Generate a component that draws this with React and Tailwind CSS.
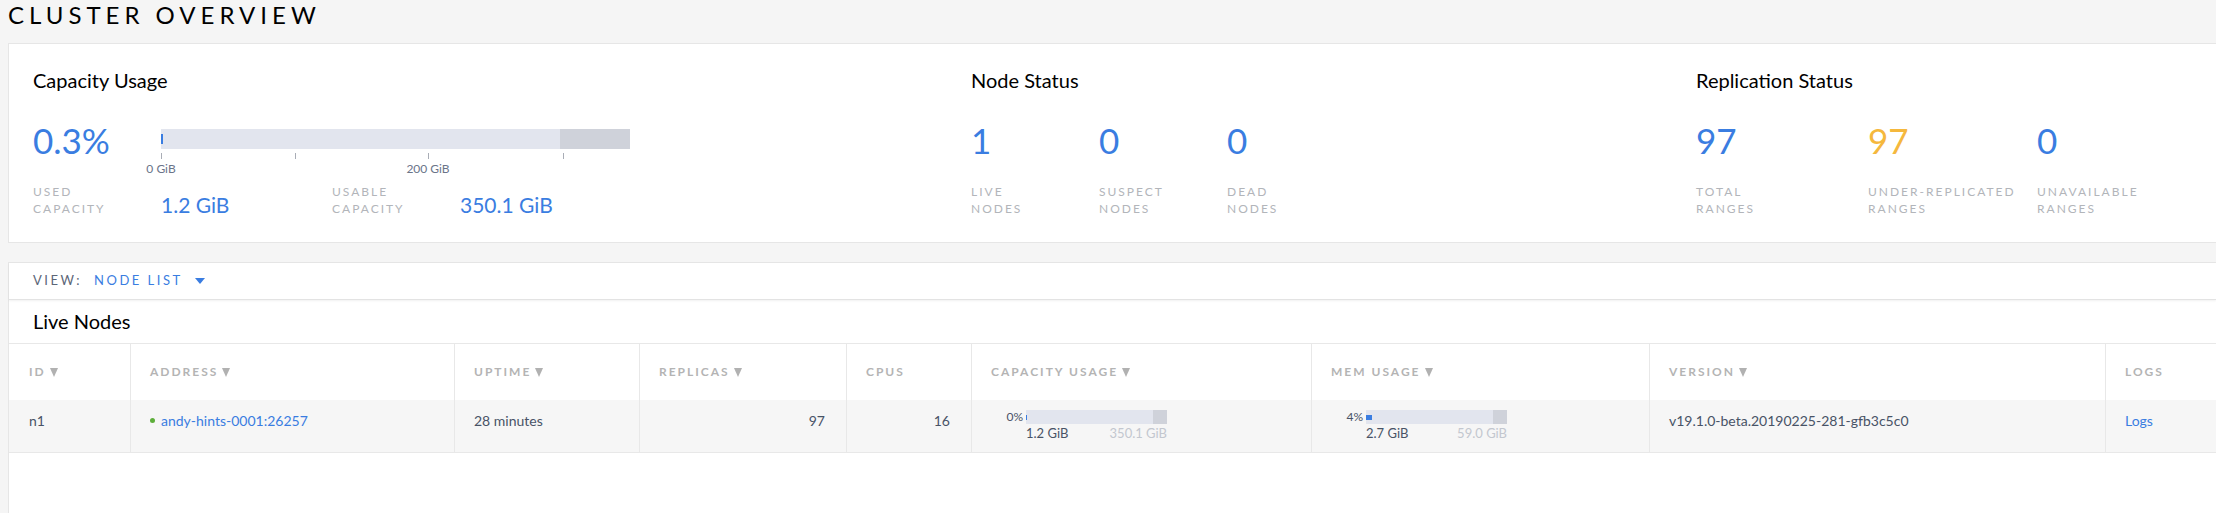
import React from "react";

const BLUE = "text-[#3a7de1]";

function SortArrow({ color = "#b1b1b1" }) {
  return (
    <svg width="8" height="9" viewBox="0 0 8 9" className="ml-[4px] inline-block">
      <polygon points="0,0 8,0 4,9" fill={color} />
    </svg>
  );
}

function StatLabel({ lines, className = "" }) {
  return (
    <div className={`text-[12px] leading-[17px] tracking-[2px] text-[#b2b5ba] ${className}`}>
      {lines.map((l) => (
        <div key={l}>{l}</div>
      ))}
    </div>
  );
}

function Stat({ value, lines, color = BLUE, width }) {
  return (
    <div className={width}>
      <div className={`text-[35px] leading-[35px] ${color}`}>{value}</div>
      <StatLabel lines={lines} className="mt-[25px]" />
    </div>
  );
}

function CapacityUsage() {
  return (
    <div className="w-[938px] shrink-0">
      <h3 className="text-[20px] leading-[22px] text-black">Capacity Usage</h3>
      <div className="mt-[32px] flex h-[60px]">
        <div className={`w-[128px] text-[35px] leading-[35px] ${BLUE}`}>0.3%</div>
        <div className="mt-[6px] w-[469px]">
          <div className="flex h-[20px] items-center bg-[#e2e5ee]">
            <div className="h-[10px] w-[2px] bg-[#3a7de1]" />
            <div className="flex-1" />
            <div className="w-[70px] self-stretch bg-[#cfd2da]" />
          </div>
          {/* axis */}
          <div className="relative mt-[4px] h-[26px] text-[12px] leading-[14px] text-[#6b7489]">
            {[0, 134, 267, 402].map((x) => (
              <div key={x} className="absolute top-0 h-[6px] w-[1px] bg-[#a9adb6]" style={{ left: x }} />
            ))}
            <div className="absolute top-[9px] w-[60px] -translate-x-1/2 text-center" style={{ left: 0 }}>
              0 GiB
            </div>
            <div className="absolute top-[9px] w-[60px] -translate-x-1/2 text-center" style={{ left: 267 }}>
              200 GiB
            </div>
          </div>
        </div>
      </div>
      <div className="flex items-end">
        <StatLabel lines={["USED", "CAPACITY"]} className="w-[128px]" />
        <div className={`w-[171px] text-[21px] leading-[24px] ${BLUE}`}>1.2 GiB</div>
        <StatLabel lines={["USABLE", "CAPACITY"]} className="w-[128px]" />
        <div className={`text-[21px] leading-[24px] ${BLUE}`}>350.1 GiB</div>
      </div>
    </div>
  );
}

function NodeStatus() {
  return (
    <div className="w-[725px] shrink-0">
      <h3 className="text-[20px] leading-[22px] text-black">Node Status</h3>
      <div className="mt-[32px] flex">
        <Stat value="1" lines={["LIVE", "NODES"]} width="w-[128px]" />
        <Stat value="0" lines={["SUSPECT", "NODES"]} width="w-[128px]" />
        <Stat value="0" lines={["DEAD", "NODES"]} width="w-[128px]" />
      </div>
    </div>
  );
}

function ReplicationStatus() {
  return (
    <div className="shrink-0">
      <h3 className="text-[20px] leading-[22px] text-black">Replication Status</h3>
      <div className="mt-[32px] flex">
        <Stat value="97" lines={["TOTAL", "RANGES"]} width="w-[172px]" />
        <Stat value="97" lines={["UNDER-REPLICATED", "RANGES"]} color="text-[#f5b83d]" width="w-[169px]" />
        <Stat value="0" lines={["UNAVAILABLE", "RANGES"]} width="w-[160px]" />
      </div>
    </div>
  );
}

function UsageBar({ pct, fill, used, total }) {
  return (
    <div className="flex items-start pt-[10px]">
      <div className="w-[35px] pr-[3px] text-right text-[12px] leading-[14px] text-[#485366]">{pct}</div>
      <div className="w-[141px]">
        <div className="flex h-[14px] items-center bg-[#e2e5ee]">
          <div className="h-[5px] bg-[#3a7de1]" style={{ width: fill }} />
          <div className="flex-1" />
          <div className="w-[14px] self-stretch bg-[#cfd2da]" />
        </div>
        <div className="mt-[1px] flex justify-between text-[13px] leading-[16px]">
          <span className="text-[#485366]">{used}</span>
          <span className="text-[#c3c7cf]">{total}</span>
        </div>
      </div>
    </div>
  );
}

const columns = [
  { label: "ID", sort: true },
  { label: "ADDRESS", sort: true },
  { label: "UPTIME", sort: true },
  { label: "REPLICAS", sort: true },
  { label: "CPUS" },
  { label: "CAPACITY USAGE", sort: true },
  { label: "MEM USAGE", sort: true },
  { label: "VERSION", sort: true },
  { label: "LOGS" },
];

const grid =
  "grid grid-cols-[121px_324px_185px_207px_125px_340px_338px_456px_1fr]";

function NodeTable() {
  const cell = "border-l border-[#e8e8e8] pl-[19px] pr-[21px]";
  return (
    <div className="border-t border-[#e8e8e8]">
      <div className={`${grid} h-[56px]`}>
        {columns.map((c, i) => (
          <div
            key={c.label}
            className={`flex items-center text-[12px] font-bold tracking-[2px] text-[#b4b4b4] ${
              i === 0 ? "pl-[20px]" : cell
            }`}
          >
            <span>{c.label}</span>
            {c.sort && <SortArrow />}
          </div>
        ))}
      </div>
      <div className={`${grid} h-[53px] border-b border-[#e8e8e8] bg-[#f6f6f6] text-[14px] leading-[21px] text-[#485366]`}>
        <div className="pl-[20px] pt-[10px]">n1</div>
        <div className={`${cell} flex items-start pt-[10px]`}>
          <span className="mr-[6px] mt-[8px] h-[5px] w-[5px] rounded-full bg-[#5dae3a]" />
          <a className={BLUE}>andy-hints-0001:26257</a>
        </div>
        <div className={`${cell} pt-[10px]`}>28 minutes</div>
        <div className={`${cell} pt-[10px] text-right`}>97</div>
        <div className={`${cell} pt-[10px] text-right`}>16</div>
        <div className={cell}>
          <UsageBar pct="0%" fill={1} used="1.2 GiB" total="350.1 GiB" />
        </div>
        <div className={cell}>
          <UsageBar pct="4%" fill={6} used="2.7 GiB" total="59.0 GiB" />
        </div>
        <div className={`${cell} pt-[10px]`}>v19.1.0-beta.20190225-281-gfb3c5c0</div>
        <div className={`${cell} pt-[10px]`}>
          <a className={BLUE}>Logs</a>
        </div>
      </div>
    </div>
  );
}

export default function App() {
  return (
    <div
      className="flex h-[513px] flex-col overflow-hidden bg-[#f5f5f5] pl-[8px]"
      style={{ fontFamily: "Lato, 'Noto Sans', sans-serif" }}
    >
      <h1 className="h-[30px] text-[24px] leading-[30px] tracking-[5px] text-black">CLUSTER OVERVIEW</h1>

      <section className="mt-[13px] flex border border-r-0 border-[#e6e6e6] bg-white pb-[25px] pl-[24px] pt-[25px]">
        <CapacityUsage />
        <NodeStatus />
        <ReplicationStatus />
      </section>

      <section className="mt-[19px] flex-1 border border-r-0 border-b-0 border-[#e6e6e6] bg-white">
        <div className="flex h-[37px] items-start border-b border-[#e3e3e3] pl-[24px] pt-[7px] text-[13px] leading-[20px] tracking-[2.5px] shadow-[0_1px_2px_rgba(0,0,0,0.06)]">
          <span className="text-[#5c6678]">VIEW:</span>
          <span className={`ml-[12px] ${BLUE}`}>NODE LIST</span>
          <svg width="10" height="6" viewBox="0 0 10 6" className="ml-[12px] mt-[8px]">
            <polygon points="0,0 10,0 5,6" fill="#3a7de1" />
          </svg>
        </div>
        <h3 className="pb-[11px] pl-[24px] pt-[10px] text-[20px] leading-[22px] text-black">Live Nodes</h3>
        <NodeTable />
      </section>
    </div>
  );
}
